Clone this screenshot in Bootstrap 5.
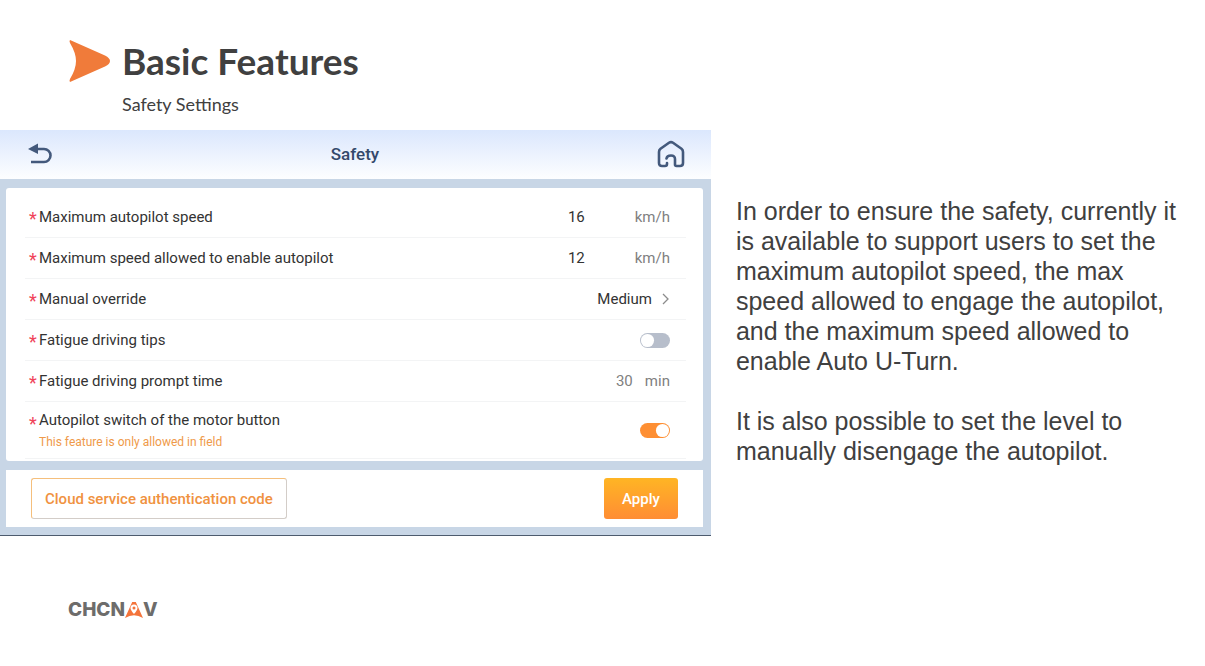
<!DOCTYPE html>
<html lang="en">
<head>
<meta charset="utf-8">
<meta name="viewport" content="width=device-width, initial-scale=1">
<title>Basic Features – Safety Settings</title>
<link href="https://cdn.jsdelivr.net/npm/bootstrap@5.3.0/dist/css/bootstrap.min.css" rel="stylesheet">
<style>
  body { background: #fff; color: #404040; font-family: "Liberation Sans", sans-serif; }
  .slide-head { padding: 38px 68px 0; font-family: Lato, sans-serif; }
  .slide-title { font-size: 37px; line-height: 46px; font-weight: 700; }
  .slide-sub { font-size: 18px; line-height: 24px; margin: 8px 0 0 54px; }
  .slide-main { padding-top: 14px; }
  .col-device { width: 59%; }
  .device { background: #c8d6e6; border-bottom: 1px solid #4d5b6e; font-family: Roboto, sans-serif; font-size: 15px; line-height: 20px; color: #333; }
  .device-bar { background: linear-gradient(#dbe7fd, #fdfeff); height: 49px; padding: 0 26px 2px; }
  .device-title { font-size: 17px; line-height: 20px; font-weight: 500; color: #34496b; }
  .device-body { padding: 9px 8px 8px 6px; }
  .icon-btn { border: 0; background: none; padding: 0; line-height: 0; }
  .panel { background: #fff; border-radius: 3px; padding: 9px 17px 2px 19px; }
  .setting { min-height: 41px; padding: 0 16px 0 4px; border-bottom: 1px solid #f3f4f5; }
  .setting-tall { min-height: 57px; }
  .star { color: #f0435a; width: 10px; font-size: 18px; line-height: 20px; padding-top: 4px; }
  .value { border: 0; background: none; padding: 0; width: 32px; color: #333; -moz-appearance: textfield; appearance: textfield; }
  .value::-webkit-inner-spin-button { appearance: none; }
  .unit { color: #808080; text-align: right; width: 70px; }
  .value-muted { width: 18px; color: #808080; }
  .unit-near { color: #808080; width: 36px; text-align: right; }
  .hint { font-size: 12px; line-height: 16px; color: #ef9a4a; padding-left: 10px; }
  .setting .form-check-input { width: 30px; height: 15px; margin: 0; border: 0; background-color: #b7becb;
    background-image: url("data:image/svg+xml,%3csvg xmlns='http://www.w3.org/2000/svg' viewBox='-4 -4 8 8'%3e%3ccircle r='3.5' fill='%23fff'/%3e%3c/svg%3e"); }
  .setting .form-check-input:checked { background-color: #fe8f33; }
  .device-foot { background: #fff; padding: 8px 25px; margin-top: 9px; }
  .btn-code, .btn-apply { font-size: 15px; line-height: 20px; font-weight: 500; height: 41px; border-radius: 3px; padding: 0 13px; }
  .btn-code { color: #f0923f; border: 1px solid #f5bf7c; border-right-color: #d3cdc8; border-bottom-color: #d3cdc8; }
  .btn-apply { color: #fff; border: 0; width: 74px; background: linear-gradient(#ffb524, #ff8d34); }
  .notes { font-size: 25px; line-height: 30px; padding: 66px 20px 0 25px; }
  .notes p { margin-bottom: 30px; }
  .brand { padding: 62px 68px 0; font-family: Inter, sans-serif; font-size: 19px; line-height: 24px; font-weight: 800; color: #6d6c6b; }
</style>
</head>
<body>
<header class="slide-head">
  <div class="d-flex align-items-center">
    <svg width="42" height="42" viewBox="0 0 42 42" class="me-2" aria-hidden="true"><path d="M2 0 L37 15.500Q42 18 42 21Q42 24 37 26.500L2 42Q1 41 2 39Q8 29 8 21Q8 13 2 3Q1 1 2 0Z" fill="#f07b3a"/></svg>
    <h1 class="slide-title mb-0 ms-1">Basic Features</h1>
  </div>
  <p class="slide-sub">Safety Settings</p>
</header>

<main class="slide-main d-flex">
  <section class="col-device flex-shrink-0">
    <form class="device">
      <div class="device-bar d-flex align-items-center justify-content-between">
        <button type="button" class="icon-btn" aria-label="Back"><svg width="27" height="24" viewBox="0 0 27 24"><path d="M2 7 12 1.500V12Z" fill="#43597c"/><path d="M10 7H18A6.500 6.500 0 0 1 18 20H5" fill="none" stroke="#43597c" stroke-width="2.600"/></svg></button>
        <span class="device-title">Safety</span>
        <button type="button" class="icon-btn" aria-label="Home"><svg width="28" height="28" viewBox="0 0 28 28"><path d="M10 23V24Q10 26 8 26H5Q2 26 2 23V12Q2 10 3.500 8.800L12 2.800Q14 1.400 16 2.800L24.500 8.800Q26 10 26 12V23Q26 26 23 26H19.500Q18 26 18 24.500V19Q18 15.500 14 15.500Q10 15.500 9.500 18.500" fill="none" stroke="#43597c" stroke-width="2.600" stroke-linecap="round" stroke-linejoin="round"/></svg></button>
      </div>
      <div class="device-body">
        <div class="panel">
          <div class="setting d-flex align-items-center">
            <span class="star">*</span><label for="maxSpeed" class="me-auto">Maximum autopilot speed</label>
            <input id="maxSpeed" class="value" type="number" value="16"><span class="unit">km/h</span>
          </div>
          <div class="setting d-flex align-items-center">
            <span class="star">*</span><label for="enableSpeed" class="me-auto">Maximum speed allowed to enable autopilot</label>
            <input id="enableSpeed" class="value" type="number" value="12"><span class="unit">km/h</span>
          </div>
          <div class="setting d-flex align-items-center">
            <span class="star">*</span><label for="override" class="me-auto">Manual override</label>
            <button id="override" type="button" class="border-0 bg-transparent p-0 text-reset d-flex align-items-center gap-2">Medium
              <svg width="10" height="12" viewBox="0 0 10 12"><path d="M3 1 8 6 3 11" fill="none" stroke="#8c8c8c" stroke-width="1.300"/></svg></button>
          </div>
          <div class="setting d-flex align-items-center">
            <span class="star">*</span><label for="tips" class="me-auto">Fatigue driving tips</label>
            <div class="form-switch p-0 d-flex"><input id="tips" class="form-check-input" type="checkbox" role="switch"></div>
          </div>
          <div class="setting d-flex align-items-center">
            <span class="star">*</span><label for="prompt" class="me-auto">Fatigue driving prompt time</label>
            <input id="prompt" class="value value-muted" type="number" value="30"><span class="unit-near">min</span>
          </div>
          <div class="setting setting-tall d-flex align-items-center">
            <div class="me-auto">
              <div class="d-flex"><span class="star">*</span><label for="motor">Autopilot switch of the motor button</label></div>
              <div class="hint">This feature is only allowed in field</div>
            </div>
            <div class="form-switch p-0 d-flex"><input id="motor" class="form-check-input" type="checkbox" role="switch" checked></div>
          </div>
        </div>
        <div class="device-foot d-flex justify-content-between">
          <button type="button" class="btn btn-code">Cloud service authentication code</button>
          <button type="submit" class="btn btn-apply">Apply</button>
        </div>
      </div>
    </form>
  </section>
  <section class="notes">
    <p>In order to ensure the safety, currently it is available to support users to set the maximum autopilot speed, the max speed allowed to engage the autopilot, and the maximum speed allowed to enable Auto U-Turn.</p>
    <p class="mb-0">It is also possible to set the level to manually disengage the autopilot.</p>
  </section>
</main>

<footer class="brand d-flex align-items-center" aria-label="CHCNAV">
  <span>CHCN</span><svg width="18" height="16" viewBox="0 0 18 16" aria-hidden="true"><path d="M7.200 0H10.800L18 16Q9 10.500 0 16Z" fill="#f4743b"/><path d="M9 12Q5.500 8 5.500 6A3.500 3.500 0 0 1 12.500 6Q12.500 8 9 12Z" fill="#fff"/><circle cx="9" cy="6" r="1.500" fill="#f4743b"/></svg><span>V</span>
</footer>
<script src="https://cdn.jsdelivr.net/npm/bootstrap@5.3.0/dist/js/bootstrap.bundle.min.js"></script>
</body>
</html>
